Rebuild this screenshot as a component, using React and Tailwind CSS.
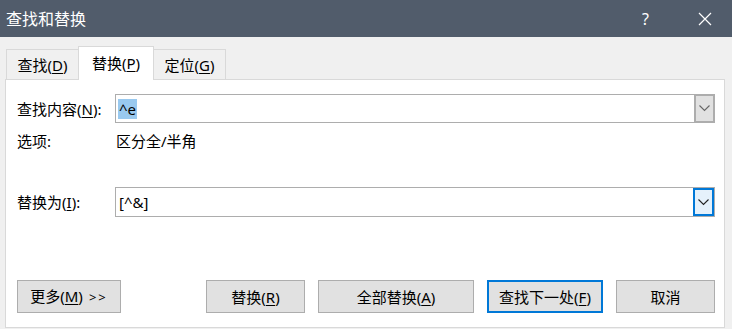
import React from "react";

const Chevron = ({ color = "#555" }) => (
  <svg width="11" height="7" viewBox="0 0 11 7" fill="none">
    <path d="M0.5 0.5 L5.5 5.5 L10.5 0.5" stroke={color} strokeWidth="1.1" />
  </svg>
);

// label with an underlined access key, e.g. 查找(<u>D</u>)
const Key = ({ pre, k, post = ")" }) => (
  <span>
    {pre}(<span className="underline underline-offset-2">{k}</span>
    {post}
  </span>
);

const Tab = ({ children, active }) =>
  active ? (
    <div className="relative z-10 -mb-px flex h-[34px] w-[76px] items-center justify-center border border-b-0 border-[#d9d9d9] bg-white pb-[2px]">
      {children}
    </div>
  ) : (
    <div className="flex h-[30px] w-[72px] items-center justify-center border border-b-0 border-[#d9d9d9] bg-[#f0f0f0] first:border-r-0 last:border-l-0">
      {children}
    </div>
  );

const Combo = ({ children, focused }) => (
  <div className="flex h-full flex-1 border border-[#adadad] bg-white">
    <div className="flex flex-1 items-center pl-[2px]">{children}</div>
    <div
      className={
        focused
          ? "flex w-[21px] items-center justify-center border-2 border-[#0078d7] bg-[#e5f1fb]"
          : "flex w-[21px] items-center justify-center border-2 border-[#adadad] bg-[#e1e1e1] -m-px"
      }
    >
      <Chevron color={focused ? "#222" : "#666"} />
    </div>
  </div>
);

const Btn = ({ children, w, primary }) => (
  <button
    className={`flex h-[33px] ${w} items-center justify-center bg-[#e1e1e1] ${
      primary ? "border-2 border-[#0078d7]" : "border border-[#adadad]"
    }`}
  >
    {children}
  </button>
);

export default function App() {
  return (
    <div
      className="flex h-[329px] w-[732px] flex-col bg-[#f0f0f0] text-[15px] leading-[20px] text-black"
      style={{ fontFamily: '"Noto Sans", "Noto Sans CJK SC", sans-serif' }}
    >
      {/* title bar */}
      <div className="flex h-[37px] items-center bg-[#515c6b] pl-[6px] text-white">
        <span className="text-[16px]">查找和替换</span>
        <span className="ml-auto mr-[49px] text-[16px]">?</span>
        <svg className="mr-[20px]" width="14" height="14" viewBox="0 0 14 14">
          <path d="M1 1 L13 13 M13 1 L1 13" stroke="#fff" strokeWidth="1.2" />
        </svg>
      </div>

      {/* tabs */}
      <div className="mt-[9px] flex items-end pl-[6px]">
        <Tab>
          <Key pre="查找" k="D" />
        </Tab>
        <Tab active>
          <Key pre="替换" k="P" />
        </Tab>
        <Tab>
          <Key pre="定位" k="G" />
        </Tab>
      </div>

      {/* panel */}
      <div className="mb-px ml-[5px] mr-[7px] flex flex-1 flex-col border border-[#d9d9d9] bg-white pl-[11px] pr-[9px]">
        <div className="mt-[14px] flex h-[29px] items-center">
          <div className="w-[98px]">
            <Key pre="查找内容" k="N" post="):" />
          </div>
          <Combo>
            <span className="bg-[#99c9ef] px-[1px] leading-[20px]">^e</span>
          </Combo>
        </div>

        <div className="mt-[8px] flex h-[20px] items-center">
          <div className="w-[99px]">选项:</div>
          <div>区分全/半角</div>
        </div>

        <div className="mt-[36px] flex h-[30px] items-center">
          <div className="w-[98px]">
            <Key pre="替换为" k="I" post="):" />
          </div>
          <Combo focused>
            <span className="pl-[1px]">[^&amp;]</span>
          </Combo>
        </div>

        <div className="mt-[63px] flex">
          <Btn w="w-[104px]">
            <span>
              更多(<span className="underline underline-offset-2">M</span>)
              <span className="ml-[6px] text-[13px] tracking-[2px]">&gt;&gt;</span>
            </span>
          </Btn>
          <div className="ml-auto flex gap-[13px]">
            <Btn w="w-[99px]">
              <Key pre="替换" k="R" />
            </Btn>
            <Btn w="w-[156px]">
              <Key pre="全部替换" k="A" />
            </Btn>
            <Btn w="w-[116px]" primary>
              <Key pre="查找下一处" k="F" />
            </Btn>
            <Btn w="w-[99px]">取消</Btn>
          </div>
        </div>
      </div>
    </div>
  );
}
